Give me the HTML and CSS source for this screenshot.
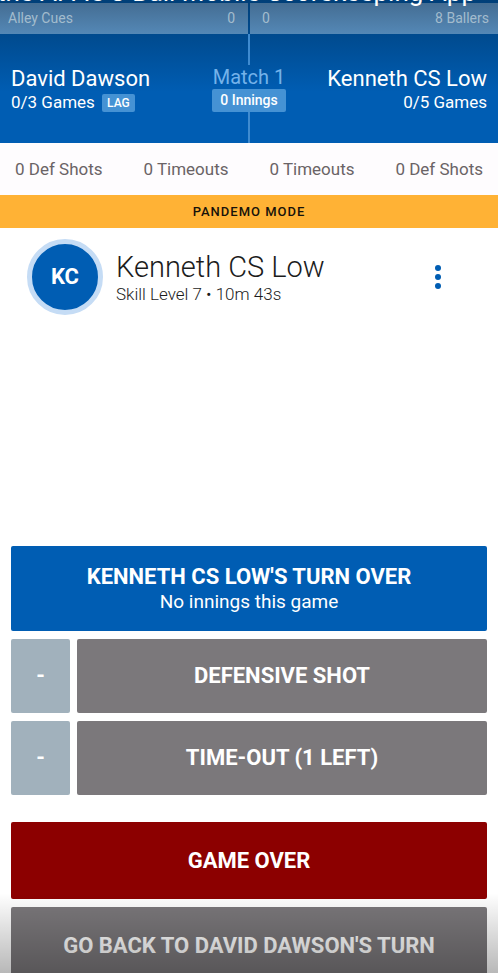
FILE: index.html
```html
<!DOCTYPE html>
<html lang="en">
<head>
<meta charset="utf-8">
<meta name="viewport" content="width=device-width, initial-scale=1">
<title>Match scorekeeper</title>
<link rel="stylesheet" href="styles.css">
</head>
<body>
<div class="app">
  <header class="scoreboard">
    <div class="teams">
      <div class="team"><span>Alley Cues</span><span>0</span></div>
      <div class="team"><span>0</span><span>8 Ballers</span></div>
    </div>
    <div class="match">
      <div class="player">
        <div class="player-name">David Dawson</div>
        <div class="games">0/3 Games <span class="lag">LAG</span></div>
      </div>
      <div class="center">
        <span class="rule"></span>
        <div class="match-label">Match 1</div>
        <div class="innings">0 Innings</div>
        <span class="rule"></span>
      </div>
      <div class="player player-right">
        <div class="player-name">Kenneth CS Low</div>
        <div class="games">0/5 Games</div>
      </div>
    </div>
    <p class="video-title">the APA's 8-Ball Mobile Scorekeeping App</p>
  </header>
  <div class="stats">
    <span>0 Def Shots</span><span>0 Timeouts</span><span>0 Timeouts</span><span>0 Def Shots</span>
  </div>
  <div class="mode">PANDEMO MODE</div>
  <main class="content">
    <section class="current">
      <div class="avatar">KC</div>
      <div class="current-info">
        <h1 class="current-name">Kenneth CS Low</h1>
        <p class="skill">Skill Level 7 • 10m 43s</p>
      </div>
      <button class="more" type="button" aria-label="More options">
        <svg width="8" height="26" viewBox="0 0 8 26" fill="currentColor"><circle cx="4" cy="4" r="3"/><circle cx="4" cy="13" r="3"/><circle cx="4" cy="22" r="3"/></svg>
      </button>
    </section>
    <section class="actions">
      <button class="btn btn-turn" type="button">KENNETH CS LOW'S TURN OVER<span class="btn-note">No innings this game</span></button>
      <div class="row">
        <button class="btn btn-minus" type="button" aria-label="Remove defensive shot">-</button>
        <button class="btn btn-gray" type="button">DEFENSIVE SHOT</button>
      </div>
      <div class="row">
        <button class="btn btn-minus" type="button" aria-label="Remove time-out">-</button>
        <button class="btn btn-gray" type="button">TIME-OUT (1 LEFT)</button>
      </div>
      <button class="btn btn-over" type="button">GAME OVER</button>
      <button class="btn btn-gray btn-back" type="button">GO BACK TO DAVID DAWSON'S TURN</button>
    </section>
  </main>
  <div class="shade"></div>
</div>
</body>
</html>
```

FILE: styles.css
```css
* { box-sizing: border-box; }

body {
  margin: 0;
  background: #fff;
  color: #1c1c1c;
  font-family: Roboto, "Liberation Sans", sans-serif;
}

.app {
  position: relative;
  display: flex;
  flex-direction: column;
  height: 100vh;
  overflow: hidden;
}

.scoreboard {
  position: relative;
  flex: none;
  padding-top: 3px;
  background: linear-gradient(#003f78, #005db3 92px);
  color: #fff;
}

.video-title {
  position: absolute;
  right: 22px;
  top: -24px;
  margin: 0;
  font-size: 26px;
  line-height: 32px;
  white-space: nowrap;
}

.teams {
  display: grid;
  grid-template-columns: 1fr 1fr;
  gap: 2px;
}

.team {
  display: flex;
  justify-content: space-between;
  padding: 0 9px 0 8px;
  background: linear-gradient(#446d93, #5488b6);
  color: #a3bccd;
  font-size: 14px;
  line-height: 31px;
}

.team:first-child { padding-right: 13px; }
.team:last-child { padding-left: 12px; }

.match {
  display: grid;
  grid-template-columns: 1fr auto 1fr;
  height: 109px;
}

.player { padding: 32px 11px 0; }
.player-right { text-align: right; }

.player-name {
  font-size: 22px;
  line-height: 26px;
  white-space: nowrap;
}

.games {
  font-size: 17px;
  line-height: 20px;
}

.lag {
  display: inline-block;
  margin-left: 3px;
  padding: 0 5px;
  border-radius: 2px;
  background: #4592d4;
  font-size: 12px;
  font-weight: 500;
  line-height: 18px;
  vertical-align: 1px;
}

.center {
  display: flex;
  flex-direction: column;
  align-items: center;
}

.rule {
  flex: 1;
  width: 2px;
  background: #3f8bd0;
}

.match-label {
  color: #74b2ea;
  font-size: 20px;
  line-height: 24px;
}

.innings {
  padding: 0 8px;
  border-radius: 2px;
  background: #4592d4;
  font-size: 14px;
  font-weight: 500;
  line-height: 23px;
}

.stats {
  display: flex;
  flex: none;
  justify-content: space-between;
  padding: 0 15px;
  background: #fefcfe;
  color: #6a6366;
  font-size: 17px;
  line-height: 52px;
}

.mode {
  flex: none;
  background: #ffb235;
  color: #17120a;
  font-size: 13px;
  font-weight: 500;
  letter-spacing: 1px;
  line-height: 33px;
  text-align: center;
}

.content {
  display: flex;
  flex: 1;
  flex-direction: column;
  justify-content: space-between;
}

.current {
  display: flex;
  gap: 13px;
  align-items: center;
  padding: 11px 50px 0 27px;
}

.avatar {
  width: 76px;
  height: 76px;
  border: 5px solid #c5dcf5;
  border-radius: 50%;
  background: #005db3;
  color: #fff;
  font-size: 22px;
  font-weight: 700;
  line-height: 66px;
  text-align: center;
}

.current-info {
  flex: 1;
  padding-top: 2px;
}

.current-name {
  margin: 0;
  font-size: 29px;
  font-weight: 300;
  line-height: 32px;
}

.skill {
  margin: 0;
  font-size: 17px;
  font-weight: 300;
  line-height: 22px;
}

.more {
  display: flex;
  justify-content: center;
  width: 20px;
  padding: 0;
  border: 0;
  background: none;
  color: #005db3;
}

.actions {
  display: flex;
  flex-direction: column;
  gap: 8px;
  margin-bottom: -11px;
  padding: 0 11px;
}

.btn {
  min-height: 74px;
  padding: 0;
  border: 0;
  border-radius: 2px;
  color: #fff;
  font-family: inherit;
  font-size: 22px;
  font-weight: 700;
  line-height: 26px;
}

.btn-turn {
  min-height: 85px;
  background: #005db3;
}

.btn-note {
  display: block;
  font-size: 19px;
  font-weight: 400;
  line-height: 24px;
}

.row {
  display: grid;
  grid-template-columns: 59px 1fr;
  gap: 7px;
}

.btn-minus { background: #a1b1bc; }
.btn-gray { background: #7b787b; }

.btn-over {
  min-height: 77px;
  margin-top: 19px;
  background: #8c0000;
}

.btn-back { min-height: 77px; }

.shade {
  position: absolute;
  inset: auto 0 0;
  height: 80px;
  background: linear-gradient(transparent, rgba(0, 0, 0, 0.28));
  pointer-events: none;
}
```
